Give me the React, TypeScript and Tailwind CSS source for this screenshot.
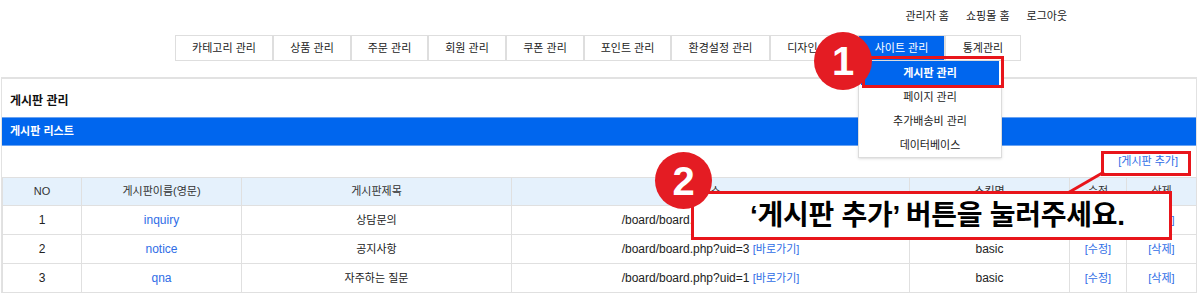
const tabs: [string, string][] = [
  ["카테고리 관리", "w-[98px]"],
  ["상품 관리", "w-[78px]"],
  ["주문 관리", "w-[77px]"],
  ["회원 관리", "w-[78px]"],
  ["쿠폰 관리", "w-[78px]"],
  ["포인트 관리", "w-[87px]"],
  ["환경설정 관리", "w-[99px]"],
  ["디자인 관리", "w-[88px]"],
  ["사이트 관리", "w-[87px]"],
  ["통계관리", "w-[76px]"],
];

const boards = [
  { no: 1, id: "inquiry", title: "상담문의", uid: 2 },
  { no: 2, id: "notice", title: "공지사항", uid: 3 },
  { no: 3, id: "qna", title: "자주하는 질문", uid: 1 },
];

const link = "text-[#2f6de6]";
const cell = "border border-[#e0e0e0] text-center";

export default function App() {
  return (
    <div className="relative w-[1200px] h-[304px] overflow-hidden bg-white text-[#222] font-['Liberation_Sans','Noto_Sans_CJK_KR',sans-serif]">
      {/* top links */}
      <div className="h-[35px] flex justify-end items-center gap-[17px] pr-[133px] pb-[3px] text-[11px]">
        <span>관리자 홈</span>
        <span>쇼핑몰 홈</span>
        <span>로그아웃</span>
      </div>

      {/* menu tabs */}
      <div className="flex pl-[175px] h-[26px]">
        {tabs.map(([name, w]) => (
          <div
            key={name}
            className={`${w} h-full flex items-center justify-center border border-[#dedede] text-[11px] ${
              name === "사이트 관리" ? "bg-[#0066ee] border-[#0066ee] text-white" : "bg-white"
            }`}
          >
            {name}
          </div>
        ))}
      </div>

      {/* panel */}
      <div className="mt-[16px] ml-[1px] w-[1196px] border-x border-t-2 border-[#e2e2e2]">
        <div className="h-[38px] flex items-center pt-[5px] pl-[8px] text-[12px] font-bold text-[#111]">
          게시판 관리
        </div>
        <div className="h-[29px] flex items-center pl-[8px] bg-[#0066ee] border-y border-[#6aa3f2] text-[11px] font-bold text-white">
          게시판 리스트
        </div>
        <div className="h-[31px] flex justify-end items-center pr-[18px] text-[11px]">
          <span className={link}>[게시판 추가]</span>
        </div>
        <table className="w-full border-collapse table-fixed">
          <colgroup>
            <col className="w-[79px]" />
            <col className="w-[160px]" />
            <col className="w-[270px]" />
            <col className="w-[398px]" />
            <col className="w-[160px]" />
            <col className="w-[57px]" />
            <col className="w-[70px]" />
          </colgroup>
          <thead>
            <tr className="h-[28px] bg-[#e5f1fc] text-[11px] text-[#333]">
              <th className={`${cell} font-normal`}>NO</th>
              <th className={`${cell} font-normal`}>게시판이름(영문)</th>
              <th className={`${cell} font-normal`}>게시판제목</th>
              <th className={`${cell} font-normal`}>주소</th>
              <th className={`${cell} font-normal`}>스킨명</th>
              <th className={`${cell} font-normal`}>수정</th>
              <th className={`${cell} font-normal`}>삭제</th>
            </tr>
          </thead>
          <tbody>
            {boards.map((b) => (
              <tr key={b.no} className="h-[29px] text-[12px]">
                <td className={cell}>{b.no}</td>
                <td className={`${cell} ${link}`}>{b.id}</td>
                <td className={`${cell} text-[11px]`}>{b.title}</td>
                <td className={cell}>
                  /board/board.php?uid={b.uid} <span className={`${link} text-[11px]`}>[바로가기]</span>
                </td>
                <td className={cell}>basic</td>
                <td className={`${cell} ${link} text-[11px]`}>[수정]</td>
                <td className={`${cell} ${link} text-[11px]`}>[삭제]</td>
              </tr>
            ))}
          </tbody>
        </table>
      </div>

      {/* dropdown menu of 사이트 관리 */}
      <div className="absolute left-[858px] top-[60px] w-[144px] bg-white border border-[#dcdcdc] shadow-sm flex flex-col text-[11px] text-[#222]">
        <div className="h-[24px] mx-[2px] flex items-center justify-center bg-[#0066ee] text-white font-bold">게시판 관리</div>
        <div className="h-[24px] flex items-center justify-center">페이지 관리</div>
        <div className="h-[24px] flex items-center justify-center">추가배송비 관리</div>
        <div className="h-[24px] flex items-center justify-center">데이터베이스</div>
      </div>

      {/* annotations */}
      <div className="absolute left-[862px] top-[56px] w-[142px] h-[32px] border-[3px] border-[#e8151b]" />
      <div className="absolute left-[814px] top-[32px] w-[58px] h-[58px] rounded-full bg-[#e41c23] flex items-center justify-center text-white text-[40px] font-bold leading-none">
        1
      </div>

      <div className="absolute left-[1101px] top-[151px] w-[90px] h-[25px] border-[3px] border-[#e8151b]" />
      <svg className="absolute left-0 top-0" width="1200" height="304">
        <line x1="1104" y1="172" x2="1066" y2="194" stroke="#e8151b" strokeWidth="3" />
      </svg>
      <div className="absolute left-[691px] top-[191px] w-[481px] h-[49px] border-[3px] border-[#e8151b] bg-white flex items-center pl-[56px] text-[28px] font-bold text-black tracking-[-0.01em] leading-none">
        ‘게시판 추가’ 버튼을 눌러주세요.
      </div>
      <div className="absolute left-[655px] top-[152px] w-[57px] h-[57px] rounded-full bg-[#e41c23] flex items-center justify-center text-white text-[40px] font-bold leading-none">
        2
      </div>
    </div>
  );
}
